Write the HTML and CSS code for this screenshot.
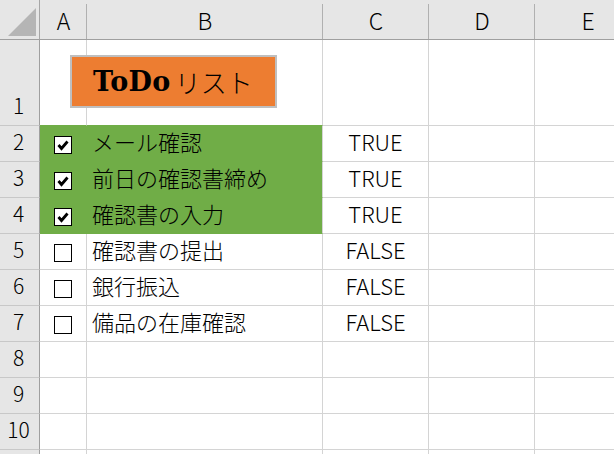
FILE: index.html
```html
<!DOCTYPE html>
<html lang="ja">
<head>
<meta charset="utf-8">
<title>ToDoリスト</title>
<link rel="stylesheet" href="styles.css">
</head>
<body>
<div class="sheet">
  <div class="corner"><svg width="39" height="39" viewBox="0 0 39 39"><polygon points="36,8 36,36 8,36" fill="#b5b5b5"/></svg></div>
  <div class="colhead">A</div>
  <div class="colhead">B</div>
  <div class="colhead">C</div>
  <div class="colhead">D</div>
  <div class="colhead">E</div>

  <div class="rowhead r1">1</div>
  <div class="cell above-g"></div><div class="cell above-g"></div><div class="cell"></div><div class="cell"></div><div class="cell"></div>

  <div class="rowhead">2</div>
  <div class="cell a g"><span class="cb"><svg width="16" height="16" viewBox="0 0 16 16"><path d="M3.5 8 L6.5 11.5 L12.5 4.5" fill="none" stroke="#000" stroke-width="2.8"/></svg></span></div>
  <div class="cell b g">メール確認</div>
  <div class="cell c">TRUE</div><div class="cell"></div><div class="cell"></div>

  <div class="rowhead">3</div>
  <div class="cell a g"><span class="cb"><svg width="16" height="16" viewBox="0 0 16 16"><path d="M3.5 8 L6.5 11.5 L12.5 4.5" fill="none" stroke="#000" stroke-width="2.8"/></svg></span></div>
  <div class="cell b g">前日の確認書締め</div>
  <div class="cell c">TRUE</div><div class="cell"></div><div class="cell"></div>

  <div class="rowhead">4</div>
  <div class="cell a g"><span class="cb"><svg width="16" height="16" viewBox="0 0 16 16"><path d="M3.5 8 L6.5 11.5 L12.5 4.5" fill="none" stroke="#000" stroke-width="2.8"/></svg></span></div>
  <div class="cell b g">確認書の入力</div>
  <div class="cell c">TRUE</div><div class="cell"></div><div class="cell"></div>

  <div class="rowhead">5</div>
  <div class="cell a"><span class="cb"></span></div>
  <div class="cell b">確認書の提出</div>
  <div class="cell c">FALSE</div><div class="cell"></div><div class="cell"></div>

  <div class="rowhead">6</div>
  <div class="cell a"><span class="cb"></span></div>
  <div class="cell b">銀行振込</div>
  <div class="cell c">FALSE</div><div class="cell"></div><div class="cell"></div>

  <div class="rowhead">7</div>
  <div class="cell a"><span class="cb"></span></div>
  <div class="cell b">備品の在庫確認</div>
  <div class="cell c">FALSE</div><div class="cell"></div><div class="cell"></div>

  <div class="rowhead">8</div>
  <div class="cell"></div><div class="cell"></div><div class="cell"></div><div class="cell"></div><div class="cell"></div>

  <div class="rowhead">9</div>
  <div class="cell"></div><div class="cell"></div><div class="cell"></div><div class="cell"></div><div class="cell"></div>

  <div class="rowhead">10</div>
  <div class="cell"></div><div class="cell"></div><div class="cell"></div><div class="cell"></div><div class="cell"></div>

  <div class="rowhead"></div>
  <div class="cell"></div><div class="cell"></div><div class="cell"></div><div class="cell"></div><div class="cell"></div>

  <div class="title"><span class="todo">ToDo</span><span class="list">リスト</span></div>
</div>
</body>
</html>
```

FILE: styles.css
```css
html, body {
  margin: 0;
  padding: 0;
  background: #fff;
  overflow: hidden;
}

.sheet {
  position: relative;
  display: grid;
  grid-template-columns: 40px 47px 236px 106px 106px 106px;
  grid-template-rows: 40px 86px repeat(10, 36px);
  font-family: "Noto Sans CJK JP", "Noto Sans", sans-serif;
  font-weight: 300;
  color: #000;
}

.corner {
  background: #e6e6e6;
  border-right: 1px solid #a6a6a6;
  border-bottom: 1px solid #9f9f9f;
  box-sizing: border-box;
  display: flex;
}

.colhead {
  box-sizing: border-box;
  border-bottom: 1px solid #9f9f9f;
  background: linear-gradient(#b0b0b0, #b0b0b0) right 0 top 4px / 1px 35px no-repeat, #e6e6e6;
  display: flex;
  align-items: center;
  justify-content: center;
  font-size: 23px;
  line-height: 1;
  padding-top: 1px;
}

.rowhead {
  box-sizing: border-box;
  background: #e6e6e6;
  border-right: 1px solid #9f9f9f;
  border-bottom: 1px solid #c8c8c8;
  display: flex;
  align-items: center;
  justify-content: center;
  font-size: 21px;
  line-height: 1;
  padding-right: 2px;
  padding-bottom: 5px;
}

.rowhead.r1 {
  align-items: flex-end;
  padding-bottom: 9px;
}

.cell {
  box-sizing: border-box;
  border-right: 1px solid #d4d4d4;
  border-bottom: 1px solid #d4d4d4;
  display: flex;
  align-items: center;
  font-size: 22px;
  line-height: 1;
  white-space: nowrap;
}

.cell.above-g {
  border-bottom-color: #70ad47;
}

.cell.a {
  justify-content: center;
}

.cell.b {
  padding-left: 5px;
  padding-bottom: 6px;
}

.cell.c {
  justify-content: center;
  padding-bottom: 6px;
}

.cell.g {
  background: #70ad47;
  border-bottom-color: #70ad47;
}

.cell.a.g {
  border-right-color: #70ad47;
}

.cb {
  box-sizing: border-box;
  width: 18px;
  height: 18px;
  border: 1px solid #000;
  background: #fff;
  margin-top: 2px;
  margin-right: 1px;
  display: flex;
}

.title {
  position: absolute;
  left: 70px;
  top: 55px;
  width: 207px;
  height: 53px;
  box-sizing: border-box;
  border: 2px solid #bfbfbf;
  background: #ed7d31;
  display: flex;
  align-items: center;
  padding-left: 21px;
  white-space: nowrap;
}

.todo {
  font-family: "DejaVu Serif", serif;
  font-weight: 900;
  font-size: 27px;
  line-height: 1;
  letter-spacing: 0.3px;
}

.list {
  font-size: 26px;
  line-height: 1;
  margin-left: 4px;
}
```
